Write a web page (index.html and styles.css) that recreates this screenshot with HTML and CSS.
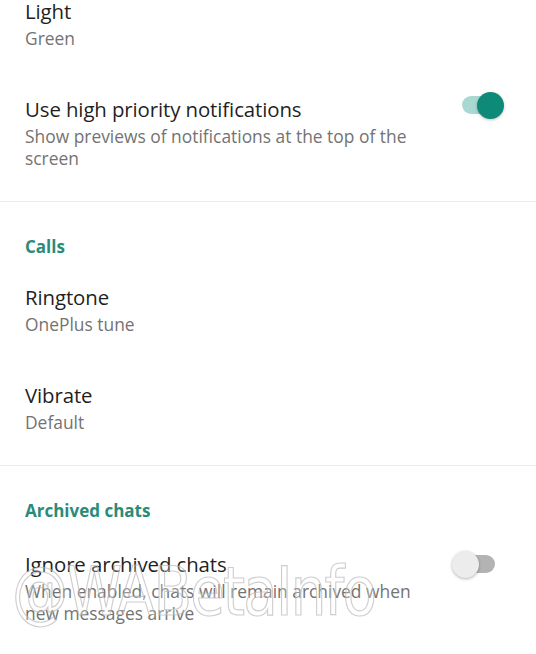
FILE: index.html
```html
<!DOCTYPE html>
<html>
<head>
<meta charset="utf-8">
<link rel="stylesheet" href="styles.css">
</head>
<body>
<main class="settings">
  <section class="section first">
    <div class="item">
      <div class="text">
        <div class="title">Light</div>
        <div class="sub">Green</div>
      </div>
    </div>
    <div class="item">
      <div class="text">
        <div class="title">Use high priority notifications</div>
        <div class="sub">Show previews of notifications at the top of the screen</div>
      </div>
      <div class="toggle on"><span class="track"></span><span class="thumb"></span></div>
    </div>
  </section>
  <section class="section">
    <h2 class="header">Calls</h2>
    <div class="item">
      <div class="text">
        <div class="title">Ringtone</div>
        <div class="sub">OnePlus tune</div>
      </div>
    </div>
    <div class="item">
      <div class="text">
        <div class="title">Vibrate</div>
        <div class="sub">Default</div>
      </div>
    </div>
  </section>
  <section class="section last">
    <h2 class="header">Archived chats</h2>
    <div class="item">
      <div class="text">
        <div class="title">Ignore archived chats</div>
        <div class="sub">When enabled, chats will remain archived when new messages arrive</div>
      </div>
      <div class="toggle off"><span class="track"></span><span class="thumb"></span></div>
    </div>
    <div class="watermark">@WABetaInfo</div>
  </section>
  <div class="bottom"></div>
</main>
</body>
</html>
```
FILE: styles.css
```css
html, body {
  margin: 0;
  padding: 0;
  background: #ffffff;
}
body {
  width: 536px;
  height: 654px;
  overflow: hidden;
  font-family: "Open Sans", "Noto Sans", sans-serif;
}
.settings {
  display: flex;
  flex-direction: column;
}
.section {
  position: relative;
  padding: 8px 0 8px;
  border-bottom: 1px solid #ececec;
}
.section.first {
  margin-top: -33px;
}
.section.last {
  border-bottom: none;
  padding-bottom: 9px;
}
.header {
  margin: 26px 25px 3px;
  font-size: 17px;
  line-height: 22px;
  font-weight: 700;
  color: #2a8c78;
}
.last .header {
  margin-bottom: 6px;
}
.item {
  display: flex;
  align-items: flex-start;
  padding: 23px 32px 24px 25px;
  gap: 24px;
}
.text {
  flex: 1;
  min-width: 0;
}
.title {
  font-size: 20.4px;
  line-height: 26px;
  color: #1f1f1f;
  letter-spacing: -0.1px;
}
.sub {
  margin-top: 3px;
  font-size: 17.4px;
  line-height: 22px;
  color: #737373;
  max-width: 410px;
}
.toggle {
  position: relative;
  flex: none;
  width: 52px;
  height: 26px;
  margin-top: 0;
}
.toggle.on {
  margin-top: -4px;
}
.track {
  position: absolute;
  left: 10px;
  right: 9px;
  top: 4px;
  height: 18px;
  border-radius: 9px;
}
.thumb {
  position: absolute;
  top: 0;
  width: 27px;
  height: 27px;
  border-radius: 50%;
}
.on .track { background: #a9d8d2; }
.on .thumb {
  right: 0;
  background: #0e8a78;
  box-shadow: 0 1px 3px rgba(0,0,0,0.25);
}
.off .track { background: #b3b3b3; }
.off .thumb {
  left: 0;
  background: #ececec;
  box-shadow: 0 1px 3px rgba(0,0,0,0.3);
}
.watermark {
  position: absolute;
  left: 12px;
  top: 92px;
  font-family: "DejaVu Sans Condensed", "Liberation Sans Narrow", sans-serif;
  font-size: 68px;
  line-height: 68px;
  letter-spacing: -2px;
  color: rgba(255,255,255,0.25);
  -webkit-text-stroke: 1.2px rgba(180,180,180,0.65);
  transform: scaleX(0.92);
  transform-origin: left top;
  pointer-events: none;
}
.bottom {
  flex: none;
  height: 12px;
  background: linear-gradient(#f6f6f6, #efefef);
}
```
